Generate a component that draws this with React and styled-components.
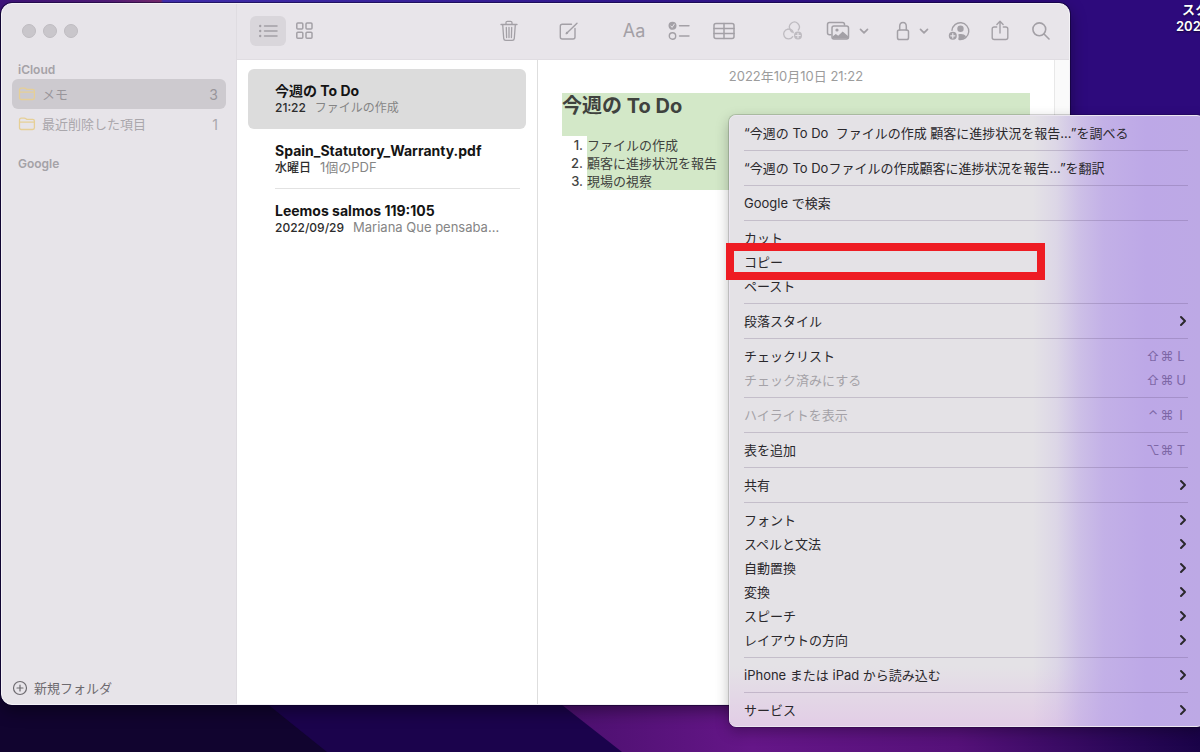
import React from "react";
import styled, { createGlobalStyle } from "styled-components";

const folders = [
  { name: "メモ", count: 3, active: true },
  { name: "最近削除した項目", count: 1 },
];

const notes = [
  { title: "今週の To Do", date: "21:22", preview: "ファイルの作成", lang: "ja", active: true },
  { title: "Spain_Statutory_Warranty.pdf", date: "水曜日", preview: "1個のPDF" },
  { title: "Leemos salmos 119:105", date: "2022/09/29", preview: "Mariana Que pensaba…", lang: "es" },
];

const todos = ["ファイルの作成", "顧客に進捗状況を報告", "現場の視察"];

const menuGroups = [
  [{ label: "“今週の To Do  ファイルの作成 顧客に進捗状況を報告…”を調べる" }],
  [{ label: "“今週の To Doファイルの作成顧客に進捗状況を報告…”を翻訳" }],
  [{ label: "Google で検索" }],
  [{ label: "カット" }, { label: "コピー", marked: true }, { label: "ペースト" }],
  [{ label: "段落スタイル", submenu: true }],
  [
    { label: "チェックリスト", keys: ["⇧", "⌘", "L"] },
    { label: "チェック済みにする", keys: ["⇧", "⌘", "U"], disabled: true },
  ],
  [{ label: "ハイライトを表示", keys: ["⌃", "⌘", "I"], disabled: true }],
  [{ label: "表を追加", keys: ["⌥", "⌘", "T"] }],
  [{ label: "共有", submenu: true }],
  [
    { label: "フォント", submenu: true },
    { label: "スペルと文法", submenu: true },
    { label: "自動置換", submenu: true },
    { label: "変換", submenu: true },
    { label: "スピーチ", submenu: true },
    { label: "レイアウトの方向", submenu: true },
  ],
  [{ label: "iPhone または iPad から読み込む", submenu: true }],
  [{ label: "サービス", submenu: true }],
];

const Icon = ({ w = 20, h = 20, stroke = 1.5, children }) => (
  <svg
    width={w}
    height={h}
    viewBox={`0 0 ${w} ${h}`}
    fill="none"
    stroke="currentColor"
    strokeWidth={stroke}
    strokeLinecap="round"
    strokeLinejoin="round"
    aria-hidden="true"
  >
    {children}
  </svg>
);

const ListIcon = () => (
  <Icon>
    <path d="M6.5 5H19M6.5 10H19M6.5 15H19" />
    <g fill="currentColor" stroke="none">
      <circle cx="2.2" cy="5" r="1.2" />
      <circle cx="2.2" cy="10" r="1.2" />
      <circle cx="2.2" cy="15" r="1.2" />
    </g>
  </Icon>
);

const GridIcon = () => (
  <Icon>
    <rect x="2.8" y="2" width="6" height="6" rx="1" />
    <rect x="12" y="2" width="6" height="6" rx="1" />
    <rect x="2.8" y="11.2" width="6" height="6" rx="1" />
    <rect x="12" y="11.2" width="6" height="6" rx="1" />
  </Icon>
);

const TrashIcon = () => (
  <Icon h={22} stroke={1.3}>
    <path d="M2 4.5H18M3.7 4.8l1 13.6c.1 1.300.8 2 2 2h6.600c1.200 0 1.900-.7 2-2l1-13.600M7 4.300V2.700c0-.9.5-1.400 1.400-1.400h3.200c.9 0 1.400.5 1.400 1.400v1.600" />
    <path d="M7.300 7.500l.3 10M10 7.500v10M12.700 7.500l-.3 10" />
  </Icon>
);

const ComposeIcon = () => (
  <Icon stroke={1.4}>
    <path d="M12.500 3.200H3.300c-1.400 0-2 .7-2 2V16c0 1.300.7 2 2 2H14c1.400 0 2-.7 2-2V7.500" />
    <path d="M8.200 11.700L18 2.200" />
    <path d="M7.200 12.700l.6-1.300.7.7z" fill="currentColor" />
  </Icon>
);

const ChecklistIcon = () => (
  <Icon w={22} stroke={1.4}>
    <circle cx="4.500" cy="4.800" r="3.300" fill="currentColor" />
    <path d="M2.900 5l1.200 1.400 2.200-3.300" stroke="#e8e5ea" strokeWidth="1" />
    <circle cx="4.500" cy="15" r="3.200" />
    <path d="M11.500 4.800H21M11.500 15H21" />
  </Icon>
);

const TableIcon = () => (
  <Icon w={22} stroke={1.5}>
    <rect x="1" y="2.500" width="20" height="15" rx="2" />
    <path d="M1 7.500H21M1 12.500H21M11 2.500V17.500" />
  </Icon>
);

const LinkIcon = () => (
  <Icon w={22} stroke={1.3}>
    <path d="M9.300 8.700A4.900 4.900 0 1 1 17.300 9" />
    <path d="M9.300 8.700c.3 1 .8 1.700 1.700 2.400" />
    <path d="M7 8.200A4.900 4.900 0 1 0 11.700 15.600" />
    <path d="M7 8.200c2.500-.2 4.700 1.300 5.200 3.500" />
    <circle cx="17" cy="14.500" r="4" fill="currentColor" stroke="none" />
    <path d="M17 12.300v4.400M14.800 14.500h4.400" stroke="#e8e5ea" strokeWidth="1.200" />
  </Icon>
);

const PhotosIcon = () => (
  <Icon w={24}>
    <path d="M5 13.700H3.500c-1.300 0-2-.7-2-2V3.500c0-1.300.7-2 2-2h13c1.300 0 2 .7 2 2V4" />
    <rect x="6" y="5" width="16.500" height="13" rx="2" />
    <circle cx="11" cy="9" r="1.600" fill="currentColor" stroke="none" />
    <path d="M6.500 15.500l3.300-2.600 2.400 1.900 4.500-4.300 5.800 4.900v2.100H7z" fill="currentColor" stroke="none" />
  </Icon>
);

const LockIcon = () => (
  <Icon w={14}>
    <rect x="1.500" y="9" width="11" height="9.500" rx="1.800" />
    <path d="M3.700 9V5.500c0-2.500 1.300-4 3.300-4s3.300 1.500 3.300 4V9" />
  </Icon>
);

const DownIcon = () => (
  <Icon w={10} h={10} stroke={1.7}>
    <path d="M1.500 3.300L5 6.800l3.500-3.500" />
  </Icon>
);

const PersonIcon = () => (
  <Icon w={22} stroke={1.4}>
    <path d="M4 9.300A8.400 8.400 0 1 1 11.500 18.500" />
    <circle cx="12.500" cy="7.700" r="3.200" fill="currentColor" stroke="none" />
    <path d="M10 18.400c.9-1.700.9-3.400.2-4.900 3-1 6-.4 7.800 1.700-1.600 2.300-4.500 3.600-8 3.200z" fill="currentColor" stroke="none" />
    <circle cx="4.800" cy="14.800" r="4" fill="currentColor" stroke="none" />
    <path d="M4.800 12.700v4.200M2.700 14.800h4.200" stroke="#e8e5ea" strokeWidth="1.200" />
  </Icon>
);

const ShareIcon = () => (
  <Icon h={22} stroke={1.4}>
    <path d="M6.700 7H4.200c-1.300 0-2 .7-2 2v8.500c0 1.300.7 2 2 2h11.600c1.300 0 2-.7 2-2V9c0-1.300-.7-2-2-2h-2.500" />
    <path d="M10 13V1.500M6.900 4.400L10 1.300l3.100 3.100" />
  </Icon>
);

const SearchIcon = () => (
  <Icon stroke={1.6}>
    <circle cx="8.300" cy="8.300" r="6.400" />
    <path d="M13 13l5 5" />
  </Icon>
);

const FolderIcon = () => (
  <Icon w={18} h={16} stroke={1.3}>
    <path d="M1.500 4c0-1.200.6-1.800 1.800-1.800h3c.8 0 1.200.2 1.700.6l.6.500h6c1.200 0 1.800.6 1.800 1.800v6.600c0 1.200-.6 1.800-1.800 1.800H3.300c-1.200 0-1.800-.6-1.800-1.800z" />
    <path d="M1.800 6.200h14.400" />
  </Icon>
);

const PlusIcon = () => (
  <Icon w={16} h={16} stroke={1.2}>
    <circle cx="8" cy="8" r="6.500" />
    <path d="M8 5v6M5 8h6" />
  </Icon>
);

const Wallpaper = () => (
  <WallpaperSvg viewBox="0 0 1200 752" preserveAspectRatio="none" aria-hidden="true">
    <defs>
      <linearGradient id="ridge" gradientUnits="userSpaceOnUse" x1="0" y1="0" x2="1200" y2="0">
        <stop offset="0" stopColor="#40147c" />
        <stop offset="0.09" stopColor="#541c7c" />
        <stop offset="0.134" stopColor="#7a2a70" />
        <stop offset="0.136" stopColor="#4430b4" />
        <stop offset="0.5" stopColor="#351a96" />
        <stop offset="0.85" stopColor="#2d0a7c" />
      </linearGradient>
      <linearGradient id="glow" gradientUnits="userSpaceOnUse" x1="560" y1="0" x2="1200" y2="0">
        <stop offset="0" stopColor="#4b106e" />
        <stop offset="0.3" stopColor="#651688" />
        <stop offset="0.62" stopColor="#551179" />
        <stop offset="0.88" stopColor="#2a0758" />
        <stop offset="1" stopColor="#1a0348" />
      </linearGradient>
    </defs>
    <rect width="1200" height="752" fill="#2d0a7c" />
    <rect width="1200" height="20" fill="url(#ridge)" />
    <path d="M0 12H60V752H0z" fill="#1e0d4a" />
    <path d="M0 690H1200V752H0z" fill="#1b034c" />
    <path d="M0 690H250L327 752H0z" fill="#11042f" />
    <path d="M543 690H1200V752H622z" fill="url(#glow)" />
  </WallpaperSvg>
);

export default function App() {
  return (
    <Desktop>
      <GlobalStyle />
      <Wallpaper />
      <DesktopLabel>
        <div>スク</div>
        <div>2022</div>
      </DesktopLabel>

      <Window>
        <Sidebar>
          <Lights>
            <button aria-label="閉じる" />
            <button aria-label="しまう" />
            <button aria-label="拡大" />
          </Lights>
          <Account>iCloud</Account>
          {folders.map((folder) => (
            <FolderRow key={folder.name} $active={folder.active}>
              <FolderIcon />
              <span>{folder.name}</span>
              <b>{folder.count}</b>
            </FolderRow>
          ))}
          <Account $spaced>Google</Account>
          <NewFolder>
            <PlusIcon />
            新規フォルダ
          </NewFolder>
        </Sidebar>

        <Main>
          <Toolbar>
            <ListTools>
              <ToolButton aria-label="リスト表示" $active><ListIcon /></ToolButton>
              <ToolButton aria-label="ギャラリー表示"><GridIcon /></ToolButton>
              <ToolButton aria-label="削除" $push><TrashIcon /></ToolButton>
            </ListTools>
            <NoteTools>
              <ToolButton aria-label="新規メモ"><ComposeIcon /></ToolButton>
              <FormatTools>
                <ToolButton>Aa</ToolButton>
                <ToolButton aria-label="チェックリスト"><ChecklistIcon /></ToolButton>
                <ToolButton aria-label="表"><TableIcon /></ToolButton>
              </FormatTools>
              <ShareTools>
                <ToolButton aria-label="リンク" $width={28} $faint><LinkIcon /></ToolButton>
                <ToolButton aria-label="写真" $width={72}><PhotosIcon /><DownIcon /></ToolButton>
                <ToolButton aria-label="ロック" $width={48}><LockIcon /><DownIcon /></ToolButton>
                <ToolButton aria-label="共同制作"><PersonIcon /></ToolButton>
                <ToolButton aria-label="共有"><ShareIcon /></ToolButton>
                <ToolButton aria-label="検索"><SearchIcon /></ToolButton>
              </ShareTools>
            </NoteTools>
          </Toolbar>

          <Panes>
            <NoteList>
              {notes.map((note) => (
                <NoteCard key={note.title} $active={note.active}>
                  <NoteBody>
                    <h3>{note.title}</h3>
                    <p>
                      <time>{note.date}</time>
                      <span lang={note.lang}>{note.preview}</span>
                    </p>
                  </NoteBody>
                </NoteCard>
              ))}
            </NoteList>
            <Editor>
              <NoteDate>2022年10月10日 21:22</NoteDate>
              <NoteTitle>今週の To Do</NoteTitle>
              <TodoList>
                {todos.map((todo, i) => (
                  <li key={todo}>
                    <span>{i + 1}.</span>
                    <mark>{todo}</mark>
                  </li>
                ))}
              </TodoList>
            </Editor>
            <Gutter />
          </Panes>
        </Main>
      </Window>

      <ContextMenu role="menu">
        {menuGroups.map((group, i) => (
          <MenuGroup key={i}>
            {group.map((item) => (
              <MenuItem key={item.label} role="menuitem" disabled={item.disabled}>
                <MenuLabel>{item.label}</MenuLabel>
                {item.submenu && (
                  <Icon w={10} h={12} stroke={2}>
                    <path d="M3 2l4 4-4 4" />
                  </Icon>
                )}
                {item.keys && (
                  <Shortcut>
                    {item.keys.map((key) => (
                      <span key={key}>{key}</span>
                    ))}
                  </Shortcut>
                )}
                {item.marked && <Marker />}
              </MenuItem>
            ))}
          </MenuGroup>
        ))}
      </ContextMenu>
    </Desktop>
  );
}

const GlobalStyle = createGlobalStyle`
  * {
    box-sizing: border-box;
  }

  body {
    margin: 0;
    font-family: Inter, "Noto Sans CJK JP", sans-serif;
    font-size: 13px;
  }

  button {
    font: inherit;
    color: inherit;
    background: none;
    border: none;
    padding: 0;
  }

  h1, h2, h3, p, ol {
    margin: 0;
    padding: 0;
  }
`;

const Desktop = styled.div`
  position: relative;
  display: flex;
  min-height: 100vh;
  padding: 3px 130px 47px 1px;
  overflow: hidden;
`;

const WallpaperSvg = styled.svg`
  position: absolute;
  inset: 0;
  width: 100%;
  height: 100%;
`;

const DesktopLabel = styled.div`
  position: absolute;
  top: 1px;
  right: 0;
  width: 24px;
  overflow: hidden;
  color: #fff;
  font-weight: 600;
  line-height: 17px;
  white-space: nowrap;
  text-shadow: 0 1px 2px rgba(0, 0, 0, 0.6);

  div:first-child {
    padding-left: 6px;
  }
`;

const Window = styled.div`
  position: relative;
  flex: 1;
  display: flex;
  background: #fff;
  border: 1px solid #f4f2f6;
  border-radius: 11px;
  overflow: hidden;
  box-shadow: 0 0 0 1px rgba(10, 0, 40, 0.5), 0 6px 16px rgba(0, 0, 0, 0.4);
`;

const Sidebar = styled.aside`
  flex: 0 0 235px;
  display: flex;
  flex-direction: column;
  padding: 20px 10px 7px 10px;
  background: #e7e4e9;
  border-right: 1px solid #dfdce1;
  color: #a5a2a7;
`;

const Lights = styled.div`
  display: flex;
  gap: 7px;
  padding-left: 10px;
  margin-bottom: 23px;

  button {
    width: 14px;
    height: 14px;
    border-radius: 50%;
    background: #c9c6cb;
    border: 1px solid #bfbcc1;
  }
`;

const Account = styled.h2`
  padding-left: 6px;
  margin-top: ${(p) => (p.$spaced ? "16px" : "0")};
  font-size: 12px;
  font-weight: 600;
  line-height: 18px;
`;

const FolderRow = styled.button`
  display: flex;
  align-items: center;
  gap: 6px;
  height: 30px;
  padding: 0 8px 0 6px;
  border-radius: 6px;
  background: ${(p) => (p.$active ? "#cdcacf" : "transparent")};
  color: ${(p) => (p.$active ? "#99969b" : "#aaa7ac")};
  text-align: left;

  svg {
    color: #e6cf96;
  }

  span {
    flex: 1;
    padding-bottom: 2px;
  }

  b {
    font-size: 14px;
    font-weight: 400;
  }
`;

const NewFolder = styled.button`
  display: flex;
  align-items: center;
  gap: 6px;
  margin-top: auto;
  color: #6d6a6f;
`;

const Main = styled.main`
  flex: 1;
  min-width: 0;
  display: flex;
  flex-direction: column;
`;

const Toolbar = styled.header`
  display: flex;
  height: 56px;
  padding-bottom: 2px;
  background: #e8e5ea;
  border-bottom: 1px solid #e0dde2;
  color: #a3a0a6;
`;

const ListTools = styled.div`
  flex: 0 0 300px;
  display: flex;
  align-items: center;
  padding: 0 10px 0 13px;
`;

const NoteTools = styled.div`
  flex: 1;
  display: flex;
  align-items: center;
  padding: 0 10px 0 14px;
`;

const FormatTools = styled.div`
  display: flex;
  gap: 9px;
  margin-left: 29px;
`;

const ShareTools = styled.div`
  display: flex;
  gap: 5px;
  margin-left: auto;
`;

const ToolButton = styled.button`
  display: flex;
  align-items: center;
  justify-content: center;
  gap: 9px;
  width: ${(p) => p.$width || 36}px;
  height: 30px;
  margin-left: ${(p) => (p.$push ? "auto" : "0")};
  border-radius: 6px;
  background: ${(p) => (p.$active ? "#d9d6db" : "transparent")};
  opacity: ${(p) => (p.$faint ? 0.6 : 1)};
  font-size: 18px;

  svg {
    flex-shrink: 0;
  }
`;

const Panes = styled.div`
  flex: 1;
  display: flex;
`;

const NoteList = styled.section`
  flex: 0 0 301px;
  padding: 9px 11px;
  border-right: 1px solid #dedede;
`;

const NoteBody = styled.div`
  height: 60px;
  padding-top: 14px;
  border-bottom: 1px solid #e2e2e2;

  h3 {
    font-size: 14px;
    font-weight: 700;
    line-height: 16px;
    color: #141414;
  }

  p {
    line-height: 16px;
    color: #858585;
    white-space: nowrap;
  }

  time {
    margin-right: 9px;
    color: #2c2c2c;
    font-size: 12px;
    font-weight: 500;
  }

  span:lang(ja) {
    font-size: 12px;
  }
`;

const NoteCard = styled.article`
  padding: 0 6px 0 27px;
  border-radius: 6px;
  background: ${(p) => (p.$active ? "#dcdcdc" : "transparent")};

  &:first-child ${NoteBody}, &:last-child ${NoteBody} {
    border-color: transparent;
  }
`;

const Editor = styled.section`
  flex: 1;
  padding: 6px 24px;
  color: #3f423e;
`;

const NoteDate = styled.p`
  margin-bottom: 7px;
  color: #9c9c9c;
  line-height: 20px;
  text-align: center;
`;

const NoteTitle = styled.h1`
  height: 43px;
  background: #d3e8c8;
  font-size: 20px;
  font-weight: 700;
  line-height: 26px;
`;

const TodoList = styled.ol`
  list-style: none;

  li {
    display: flex;
    line-height: 18px;
  }

  span {
    flex: 0 0 25px;
    padding-right: 4px;
    font-weight: 500;
    text-align: right;
  }

  mark {
    flex: 1;
    background: #d3e8c8;
    color: inherit;
  }
`;

const Gutter = styled.div`
  flex: 0 0 15px;
  background: #fafafa;
  border-left: 1px solid #e8e8e8;
`;

const ContextMenu = styled.div`
  position: absolute;
  top: 115px;
  left: 729px;
  right: -4px;
  padding: 5px 15px 4px 14px;
  border: 1px solid #ebe6f0;
  border-radius: 7px;
  background:
    linear-gradient(
      to right,
      rgba(189, 168, 231, 0) 64%,
      rgba(189, 168, 231, 0.2) 69%,
      rgba(189, 168, 231, 0.6) 74%,
      rgba(189, 168, 231, 0.85) 79%,
      #bda8e7 88%,
      #bda9e5 100%
    ),
    linear-gradient(to top, #e2cde6, #e4e2e6 60px);
  box-shadow: 0 0 0 1px rgba(0, 0, 0, 0.15), 0 5px 14px rgba(0, 0, 0, 0.28);
  color: #2a282c;
`;

const MenuGroup = styled.div`
  & + & {
    margin-top: 5px;
    padding-top: 5px;
    border-top: 1px solid rgba(70, 50, 90, 0.2);
  }
`;

const MenuItem = styled.button`
  position: relative;
  display: flex;
  align-items: center;
  justify-content: space-between;
  width: 100%;
  height: 24px;
  color: ${(p) => (p.disabled ? "#a5a2a8" : "inherit")};
`;

const MenuLabel = styled.span`
  padding-bottom: 2px;
  white-space: pre;
`;

const Shortcut = styled.kbd`
  display: grid;
  grid-template-columns: repeat(3, 14px);
  color: #7d67a6;
  font-family: Inter, "DejaVu Sans", sans-serif;
  text-align: center;
`;

// red call-out drawn around a single menu entry
const Marker = styled.i`
  position: absolute;
  top: -7px;
  bottom: -6px;
  left: -18px;
  width: 319px;
  border: 8px solid #ee1c23;
`;
